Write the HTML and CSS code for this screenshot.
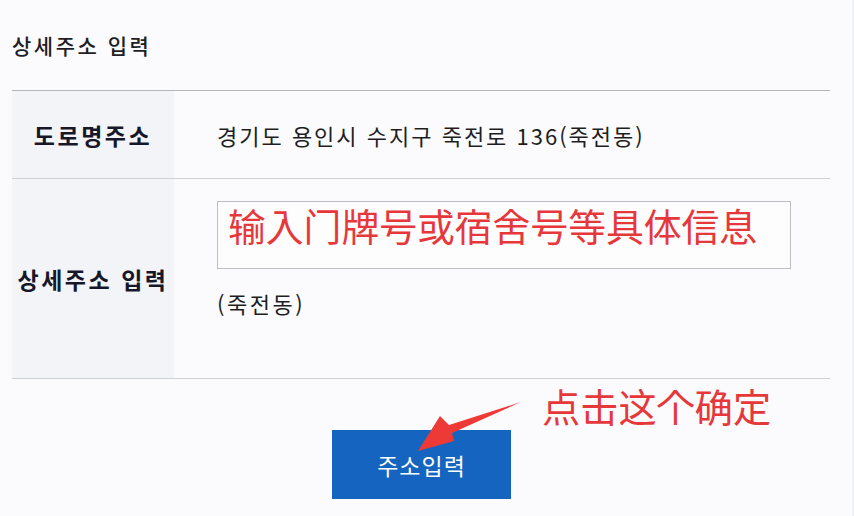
FILE: index.html
```html
<!DOCTYPE html>
<html lang="ko">
<head>
<meta charset="utf-8">
<title>상세주소 입력</title>
<link rel="stylesheet" href="styles.css">
</head>
<body>
<div class="page">
  <div class="title">상세주소 입력</div>
  <div class="table">
    <div class="row row-road">
      <div class="label">도로명주소</div>
      <div class="value">경기도 용인시 수지구 죽전로 136(죽전동)</div>
    </div>
    <div class="row row-detail">
      <div class="label">상세주소 입력</div>
      <div class="value value-detail">
        <div class="input"><span class="note-input">输入门牌号或宿舍号等具体信息</span></div>
        <div class="dong">(죽전동)</div>
      </div>
    </div>
  </div>
  <div class="actions">
    <button class="btn" type="button">주소입력</button>
    <span class="note-click">点击这个确定</span>
    <svg class="arrow" width="854" height="516" viewBox="0 0 854 516" aria-hidden="true">
      <path d="M521,402 L449,425 L440,416 L418,451 L454,441 L452,433 Z" fill="#ee3a36"/>
    </svg>
  </div>
</div>
</body>
</html>
```

FILE: styles.css
```css
html, body {
  margin: 0;
  padding: 0;
}
body {
  width: 854px;
  height: 516px;
  overflow: hidden;
  background: #fbfbfd;
  font-family: "Noto Sans CJK KR", "Noto Sans", sans-serif;
  color: #222;
}
.page {
  padding: 0 22px 0 12px;
  border-right: 2px solid #f0f1f4;
  height: 516px;
  box-sizing: border-box;
}
.title {
  height: 90px;
  display: flex;
  align-items: center;
  font-size: 21px;
  letter-spacing: 2.5px;
  font-weight: 500;
  color: #1e1e24;
}
.table {
  border-top: 1px solid #b4b5ba;
}
.row {
  display: flex;
  border-bottom: 1px solid #cfd0d4;
}
.row-road {
  height: 87px;
}
.row-detail {
  height: 199px;
}
.label {
  width: 162px;
  flex: none;
  background: #f3f4f7;
  display: flex;
  align-items: center;
  justify-content: center;
  font-size: 23px;
  letter-spacing: 2.5px;
  font-weight: 700;
  color: #17172a;
}
.value {
  padding-left: 43px;
  display: flex;
  align-items: center;
  font-size: 22px;
  letter-spacing: 2px;
  color: #1e1e22;
}
.value-detail {
  flex-direction: column;
  align-items: flex-start;
  padding-top: 22px;
}
.input {
  width: 574px;
  height: 68px;
  box-sizing: border-box;
  border: 1px solid #bdbec2;
  background: #fdfdfe;
  padding: 0 0 0 10px;
}
.note-input {
  display: block;
  font-family: "Noto Sans CJK SC", sans-serif;
  font-size: 37.8px;
  letter-spacing: 0;
  line-height: 46px;
  color: #e6383b;
}
.dong {
  margin-top: 18px;
  font-size: 22px;
  letter-spacing: 2.5px;
}
.actions {
  position: relative;
  display: flex;
  justify-content: center;
  padding-top: 51px;
}
.btn {
  width: 179px;
  height: 69px;
  border: none;
  background: #1565c0;
  color: #fff;
  font-family: "Noto Sans CJK KR", sans-serif;
  font-size: 23px;
  letter-spacing: 1px;
  padding: 0 0 0 1px;
}
.note-click {
  position: absolute;
  left: 530px;
  top: 4px;
  font-family: "Noto Sans CJK SC", sans-serif;
  font-size: 38.2px;
  line-height: 46px;
  color: #e6383b;
}
.arrow {
  position: absolute;
  left: -12px;
  top: -379px;
  pointer-events: none;
}
```
